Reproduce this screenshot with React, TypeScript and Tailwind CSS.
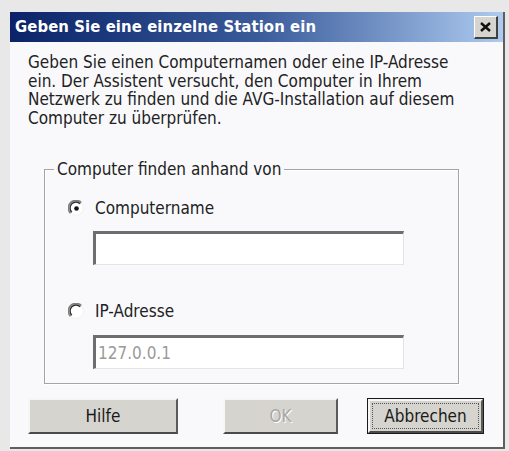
import React from "react";

function Radio({ checked }: { checked: boolean }) {
  return (
    <svg width="17" height="17" viewBox="0 0 17 17" className="shrink-0">
      <circle cx="8.5" cy="8.5" r="7.5" fill="#ffffff" />
      <path d="M2.6 13.4 A7 7 0 0 1 13.4 2.6" stroke="#808080" strokeWidth="1.6" fill="none" />
      <path d="M3.8 12.2 A5.4 5.4 0 0 1 12.2 3.8" stroke="#303030" strokeWidth="1.4" fill="none" />
      <path d="M13.4 2.6 A7 7 0 0 1 2.6 13.4" stroke="#f4f4f4" strokeWidth="1.6" fill="none" />
      {checked && <circle cx="8.5" cy="8.5" r="2.3" fill="#111111" />}
    </svg>
  );
}

function Btn({ children, w, disabled, focus }: { children: React.ReactNode; w: string; disabled?: boolean; focus?: boolean }) {
  return (
    <div className={`${w} h-[36px] ${focus ? "border border-[#1a1a1a]" : ""}`}>
      <div className="w-full h-full bg-[#d6d4cf] border-t-[2px] border-l-[2px] border-t-[#f6f6f4] border-l-[#f6f6f4] border-r-[2px] border-b-[2px] border-r-[#5a5a58] border-b-[#4a4a48] flex items-center justify-center p-[2px]">
        <div className={`w-full h-full flex items-center justify-center ${focus ? "border border-dotted border-[#555]" : ""}`}>
          <span className={disabled ? "text-[#a8a8a4] [text-shadow:1px_1px_0_#ffffff]" : "text-[#1a1a1a]"}>{children}</span>
        </div>
      </div>
    </div>
  );
}

function Field({ value }: { value?: string }) {
  return (
    <div className="w-[311px] h-[34px] bg-white border-t-[3px] border-l-[3px] border-t-[#6e6e6e] border-l-[#6e6e6e] border-r border-b border-r-[#e4e4e4] border-b-[#e4e4e4] flex items-center pl-[2px]">
      {value && <span className="text-[#9a9a9a]">{value}</span>}
    </div>
  );
}

export default function App() {
  return (
    <div
      className="w-[509px] h-[451px] bg-[#e8e8e8] pt-[12px] pl-[10px] overflow-hidden text-[17px] leading-[18.5px] text-[#222]"
      style={{ fontFamily: '"DejaVu Sans Condensed", "DejaVu Sans", Tahoma, sans-serif' }}
    >
      <div className="w-[495px] h-[437px] bg-[#f9f9fc] border-r-[2px] border-b-[2px] border-[#5e5e5e] flex flex-col">
        <div className="h-[30px] bg-gradient-to-r from-[#0b2269] via-[#3a5a9a] to-[#aecbef] flex items-center justify-between pl-[5px] pr-[5px]">
          <span className="text-white font-bold text-[16.5px] tracking-[0.1px]">Geben Sie eine einzelne Station ein</span>
          <div className="w-[24px] h-[23px] bg-[#d6d4cf] border-t border-l border-[#ffffff] border-r-[2px] border-b-[2px] border-r-[#404040] border-b-[#404040] flex items-center justify-center">
            <svg width="11" height="10" viewBox="0 0 11 10">
              <path d="M1 1 L10 9 M10 1 L1 9" stroke="#111" strokeWidth="2.4" />
            </svg>
          </div>
        </div>
        <div className="pl-[18px] pr-[4px] pt-[11px]">
          <p className="whitespace-nowrap">
            Geben Sie einen Computernamen oder eine IP-Adresse
            <br />
            ein. Der Assistent versucht, den Computer in Ihrem
            <br />
            Netzwerk zu finden und die AVG-Installation auf diesem
            <br />
            Computer zu überprüfen.
          </p>
        </div>
        <fieldset className="ml-[34px] mt-[33px] w-[415px] border border-[#a4a4a8] shadow-[inset_1px_1px_0_#ffffff,1px_1px_0_#ffffff] p-0 m-0">
          <legend className="ml-[9px] px-[3px] leading-[18px]">Computer finden anhand von</legend>
          <div className="pl-[23px] pb-[14px]">
            <div className="flex items-center gap-[10px] mt-[20px] h-[20px]">
              <Radio checked />
              <span>Computername</span>
            </div>
            <div className="ml-[25px] mt-[13px]">
              <Field />
            </div>
            <div className="flex items-center gap-[10px] mt-[36px] h-[20px]">
              <Radio checked={false} />
              <span>IP-Adresse</span>
            </div>
            <div className="ml-[25px] mt-[14px]">
              <Field value="127.0.0.1" />
            </div>
          </div>
        </fieldset>
        <div className="flex items-start pl-[18px] mt-[14px]">
          <Btn w="w-[150px]">Hilfe</Btn>
          <div className="ml-[45px]">
            <Btn w="w-[115px]" disabled>
              OK
            </Btn>
          </div>
          <div className="ml-[29px]">
            <Btn w="w-[117px]" focus>
              Abbrechen
            </Btn>
          </div>
        </div>
      </div>
    </div>
  );
}
